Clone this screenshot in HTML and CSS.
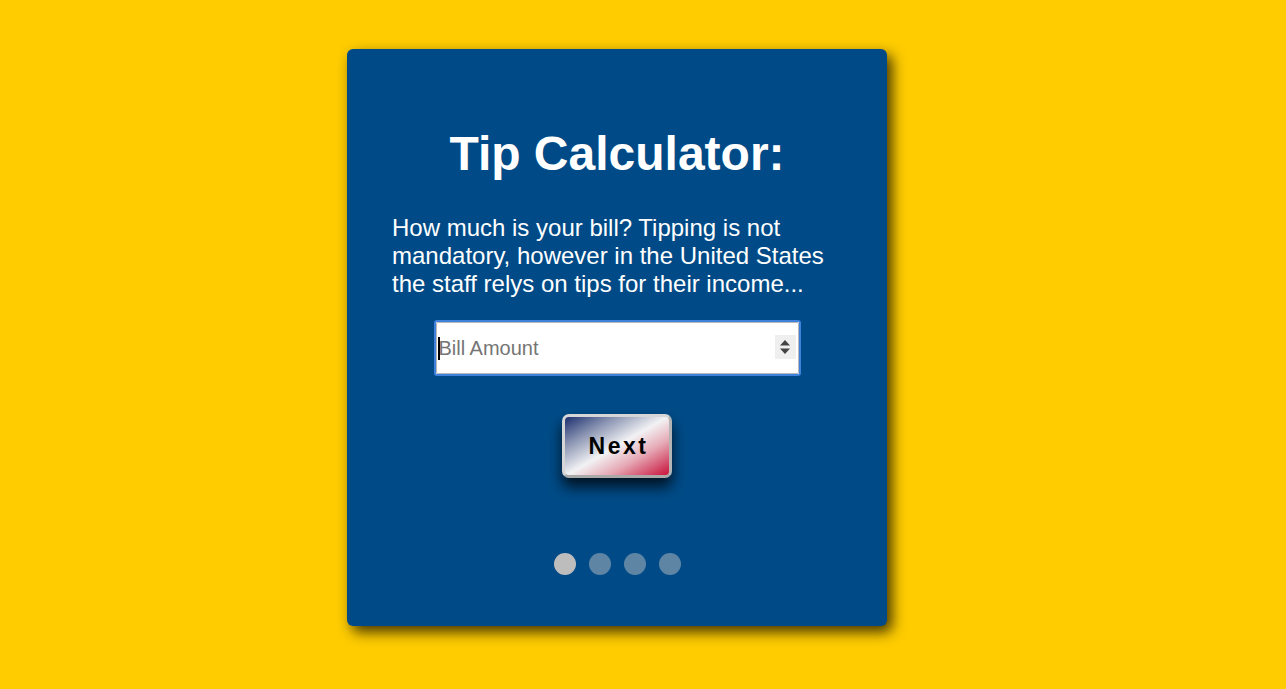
FILE: index.html
```html
<!DOCTYPE html>
<html lang="en">
<head>
<meta charset="utf-8">
<title>Tip Calculator</title>
<link rel="stylesheet" href="styles.css">
</head>
<body>
<main class="card">
  <h1 class="title">Tip Calculator:</h1>
  <p class="lead">How much is your bill? Tipping is not mandatory, however in the United States the staff relys on tips for their income...</p>
  <div class="field">
    <input class="bill" type="text" placeholder="Bill Amount">
    <span class="caret"></span>
    <span class="spin">
      <svg width="12" height="18" viewBox="0 0 12 18"><path d="M6 2 L11 7.5 H1 Z" fill="#444"/><path d="M6 16 L11 10.5 H1 Z" fill="#444"/></svg>
    </span>
  </div>
  <button class="next" type="button">Next</button>
  <div class="dots">
    <span class="dot active"></span>
    <span class="dot"></span>
    <span class="dot"></span>
    <span class="dot"></span>
  </div>
</main>
</body>
</html>
```
FILE: styles.css
```css
html, body {
  margin: 0;
  padding: 0;
}
body {
  background: #ffcc00;
  font-family: "Liberation Sans", Arial, sans-serif;
  min-height: 689px;
  display: flex;
  justify-content: flex-start;
  align-items: flex-start;
}
.card {
  box-sizing: border-box;
  width: 540px;
  height: 577px;
  margin-top: 49px;
  margin-left: 347px;
  background: #004b87;
  border-radius: 6px;
  box-shadow: 5px 6px 14px rgba(0, 0, 0, 0.75);
  padding: 77px 45px 0;
  display: flex;
  flex-direction: column;
  align-items: center;
  color: #fff;
}
.title {
  margin: 0;
  font-size: 48px;
  font-weight: bold;
  line-height: 55px;
  text-align: center;
}
.lead {
  align-self: stretch;
  margin: 33px 0 0;
  font-size: 24px;
  line-height: 28px;
  text-align: left;
}
.field {
  position: relative;
  margin-top: 22px;
  width: 367px;
  height: 56px;
  box-sizing: border-box;
  border: 2px solid #3f82dc;
  border-radius: 3px;
  background: #fff;
}
.bill {
  box-sizing: border-box;
  width: 100%;
  height: 100%;
  border: 1px solid #b8b8b8;
  border-radius: 2px;
  padding: 0 0 0 2px;
  margin: 0;
  font-family: "Liberation Sans", Arial, sans-serif;
  font-size: 20px;
  color: #222;
  background: #fff;
  outline: none;
}
.bill::placeholder {
  color: #757575;
}
.caret {
  position: absolute;
  left: 2px;
  top: 15px;
  width: 2px;
  height: 23px;
  background: #000;
}
.spin {
  position: absolute;
  right: 3px;
  top: 13px;
  width: 21px;
  height: 24px;
  background: #efefef;
  display: flex;
  align-items: center;
  justify-content: center;
}
.next {
  margin-top: 38px;
  width: 110px;
  height: 64px;
  box-sizing: border-box;
  border: 3px solid #d6d6d6;
  border-bottom-color: #a9a9a9;
  border-right-color: #b5b5b5;
  border-radius: 7px;
  background: linear-gradient(150deg, #1c2f6e 0%, #8d97b4 25%, #f2f2f4 50%, #e6aab6 70%, #c8103a 100%);
  box-shadow: 0 9px 14px rgba(0, 0, 0, 0.75);
  font-family: "Liberation Sans", Arial, sans-serif;
  font-size: 23px;
  font-weight: bold;
  letter-spacing: 2.5px;
  padding: 0 0 0 3px;
  color: #000;
  cursor: pointer;
}
.dots {
  margin-top: 75px;
  display: flex;
  gap: 13px;
  margin-left: 1px;
}
.dot {
  width: 22px;
  height: 22px;
  border-radius: 50%;
  background: #5f85a5;
}
.dot.active {
  background: #bdbdbd;
}
```
